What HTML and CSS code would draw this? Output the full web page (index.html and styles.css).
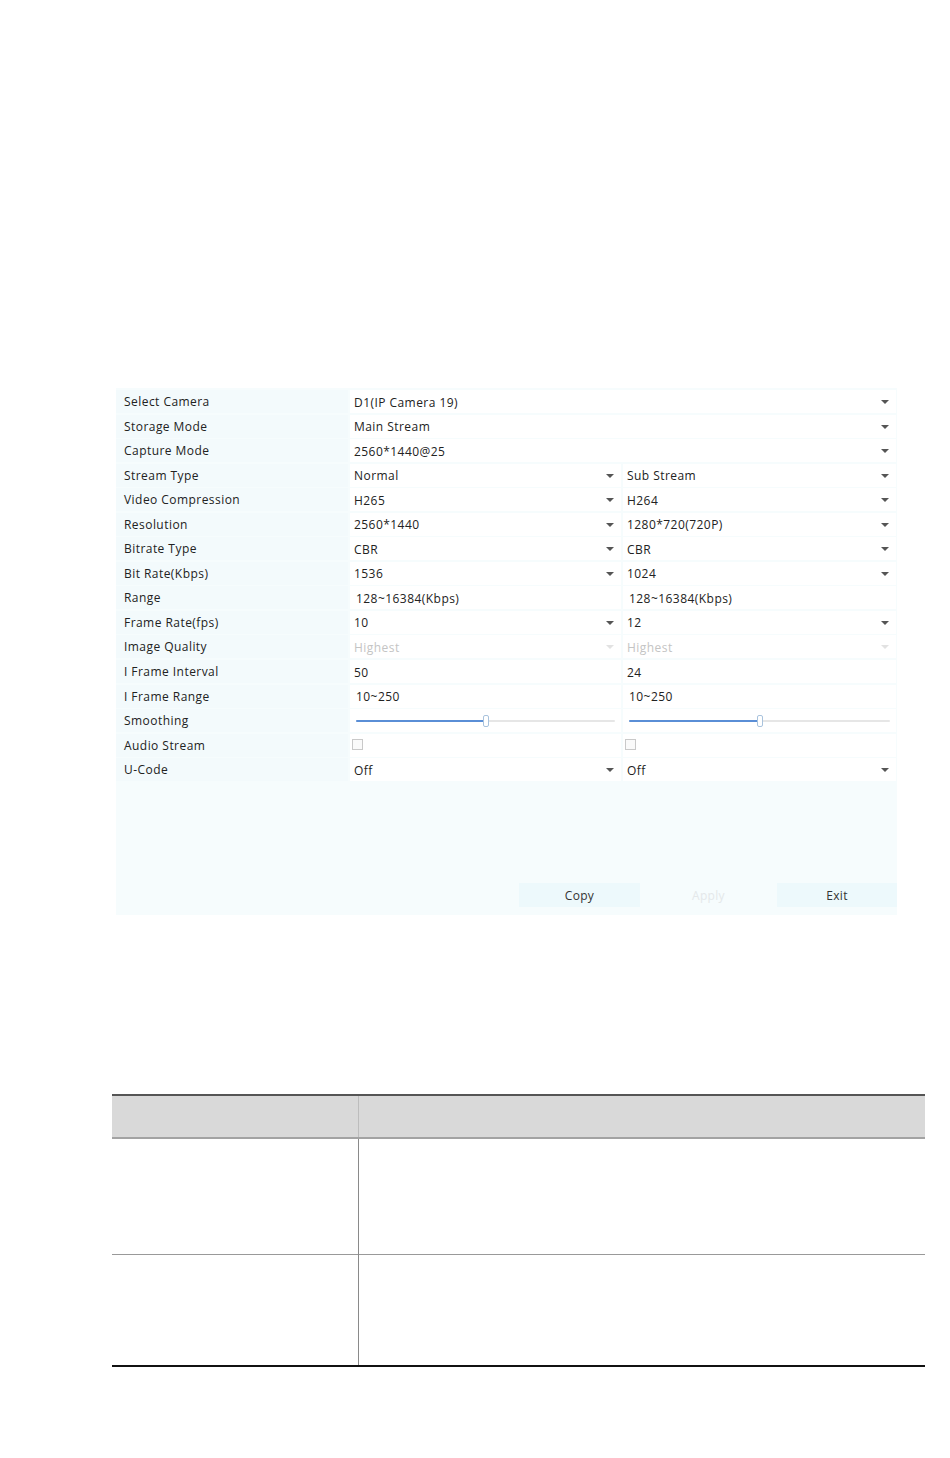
FILE: index.html
```html
<!DOCTYPE html>
<html lang="en">
<head>
    <meta charset="UTF-8">
    <title>Recording Configuration</title>
    <link rel="stylesheet" href="styles.css">
</head>
<body>
    <div class="page">
        <div class="panel">
            <div class="form">
                <div class="label">Select Camera</div>
                <div class="cell wide select"><span>D1(IP Camera 19)</span><i class="caret"></i></div>

                <div class="label">Storage Mode</div>
                <div class="cell wide select"><span>Main Stream</span><i class="caret"></i></div>

                <div class="label">Capture Mode</div>
                <div class="cell wide select"><span>2560*1440@25</span><i class="caret"></i></div>

                <div class="label">Stream Type</div>
                <div class="cell select"><span>Normal</span><i class="caret"></i></div>
                <div class="cell select"><span>Sub Stream</span><i class="caret"></i></div>

                <div class="label">Video Compression</div>
                <div class="cell select"><span>H265</span><i class="caret"></i></div>
                <div class="cell select"><span>H264</span><i class="caret"></i></div>

                <div class="label">Resolution</div>
                <div class="cell select"><span>2560*1440</span><i class="caret"></i></div>
                <div class="cell select"><span>1280*720(720P)</span><i class="caret"></i></div>

                <div class="label">Bitrate Type</div>
                <div class="cell select"><span>CBR</span><i class="caret"></i></div>
                <div class="cell select"><span>CBR</span><i class="caret"></i></div>

                <div class="label">Bit Rate(Kbps)</div>
                <div class="cell select"><span>1536</span><i class="caret"></i></div>
                <div class="cell select"><span>1024</span><i class="caret"></i></div>

                <div class="label">Range</div>
                <div class="cell text"><span>128~16384(Kbps)</span></div>
                <div class="cell text"><span>128~16384(Kbps)</span></div>

                <div class="label">Frame Rate(fps)</div>
                <div class="cell select"><span>10</span><i class="caret"></i></div>
                <div class="cell select"><span>12</span><i class="caret"></i></div>

                <div class="label">Image Quality</div>
                <div class="cell select disabled"><span>Highest</span><i class="caret"></i></div>
                <div class="cell select disabled"><span>Highest</span><i class="caret"></i></div>

                <div class="label">I Frame Interval</div>
                <div class="cell"><span>50</span></div>
                <div class="cell"><span>24</span></div>

                <div class="label">I Frame Range</div>
                <div class="cell text"><span>10~250</span></div>
                <div class="cell text"><span>10~250</span></div>

                <div class="label">Smoothing</div>
                <div class="cell slider-cell">
                    <div class="track"><div class="fill" style="width: 50%"></div><div class="thumb" style="left: 50%"></div></div>
                </div>
                <div class="cell slider-cell">
                    <div class="track"><div class="fill" style="width: 50%"></div><div class="thumb" style="left: 50%"></div></div>
                </div>

                <div class="label">Audio Stream</div>
                <div class="cell check-cell"><i class="checkbox"></i></div>
                <div class="cell check-cell"><i class="checkbox"></i></div>

                <div class="label">U-Code</div>
                <div class="cell select"><span>Off</span><i class="caret"></i></div>
                <div class="cell select"><span>Off</span><i class="caret"></i></div>
            </div>

            <div class="buttons">
                <button class="btn">Copy</button>
                <button class="btn off">Apply</button>
                <button class="btn">Exit</button>
            </div>
        </div>

        <table class="params">
            <thead>
                <tr><th></th><th></th></tr>
            </thead>
            <tbody>
                <tr class="row-a"><td></td><td></td></tr>
                <tr class="row-b"><td></td><td></td></tr>
            </tbody>
        </table>
    </div>
</body>
</html>
```

FILE: styles.css
```css
* {
    margin: 0;
    padding: 0;
    box-sizing: border-box;
}

body {
    font-family: "Open Sans", "DejaVu Sans", sans-serif;
    background: #fff;
    color: #222;
    width: 950px;
    height: 1458px;
}

.page {
    padding-top: 388px;
}

/* settings dialog */
.panel {
    margin-left: 116px;
    width: 781px;
    background: #f6fcfd;
    padding: 2px 0 8px 0;
}

.form {
    display: grid;
    grid-template-columns: 232px 271px 273px;
    grid-auto-rows: 23px;
    column-gap: 2px;
    row-gap: 1.55px;
    font-size: 12px;
    letter-spacing: 0.45px;
}

.label {
    background: #f3fafc;
    padding-left: 8px;
    display: flex;
    align-items: center;
    color: #222;
}

.cell {
    background: #fff;
    display: flex;
    align-items: center;
    padding: 1px 7px 0 4px;
    color: #222;
}

.cell.wide {
    grid-column: span 2;
}

.cell.text span {
    padding-left: 2px;
}

.caret {
    margin-left: auto;
    width: 0;
    height: 0;
    border-left: 4px solid transparent;
    border-right: 4px solid transparent;
    border-top: 4px solid #555;
}

.disabled {
    color: #c4c4c4;
}

.disabled .caret {
    border-top-color: #e2e2e2;
}

.slider-cell {
    padding: 0 6px 0 6px;
}

.track {
    position: relative;
    width: 100%;
    height: 2px;
    background: #e6e6e6;
    border-radius: 1px;
}

.fill {
    height: 100%;
    background: #5a8ed6;
    border-radius: 1px;
}

.thumb {
    position: absolute;
    top: -5px;
    width: 6px;
    height: 12px;
    margin-left: -3px;
    background: #fff;
    border: 1px solid #a9c3dd;
    border-radius: 2px;
}

.check-cell {
    padding-left: 2px;
    align-items: flex-start;
    padding-top: 5px;
}

.checkbox {
    display: block;
    width: 11px;
    height: 11px;
    border: 1px solid #c9c9c9;
    background: #fafafa;
}

.buttons {
    display: flex;
    justify-content: flex-end;
    gap: 8px;
    margin-top: 102px;
}

.btn {
    width: 121px;
    height: 24px;
    border: none;
    background: #edf9fc;
    font-family: "Open Sans", "DejaVu Sans", sans-serif;
    font-size: 12px;
    color: #333;
    letter-spacing: 0.3px;
}

.btn.off {
    background: #f6fcfd;
    color: #e4e8ea;
}

.buttons .btn:last-child {
    width: 120px;
}

/* parameter table */
.params {
    margin: 179px 0 0 112px;
    width: 813px;
    border-collapse: collapse;
}

.params th,
.params td {
    padding: 0;
}

.params thead tr {
    height: 43px;
    background: #d9d9d9;
    border-top: 2px solid #555;
    border-bottom: 2px solid #a3a3a3;
}

.params th:first-child {
    width: 246px;
    border-right: 1px solid #bdbdbd;
}

.params td:first-child {
    border-right: 1px solid #8a8a8a;
}

.row-a {
    height: 116px;
    border-bottom: 1px solid #999;
}

.row-b {
    height: 112px;
    border-bottom: 2px solid #111;
}
```
